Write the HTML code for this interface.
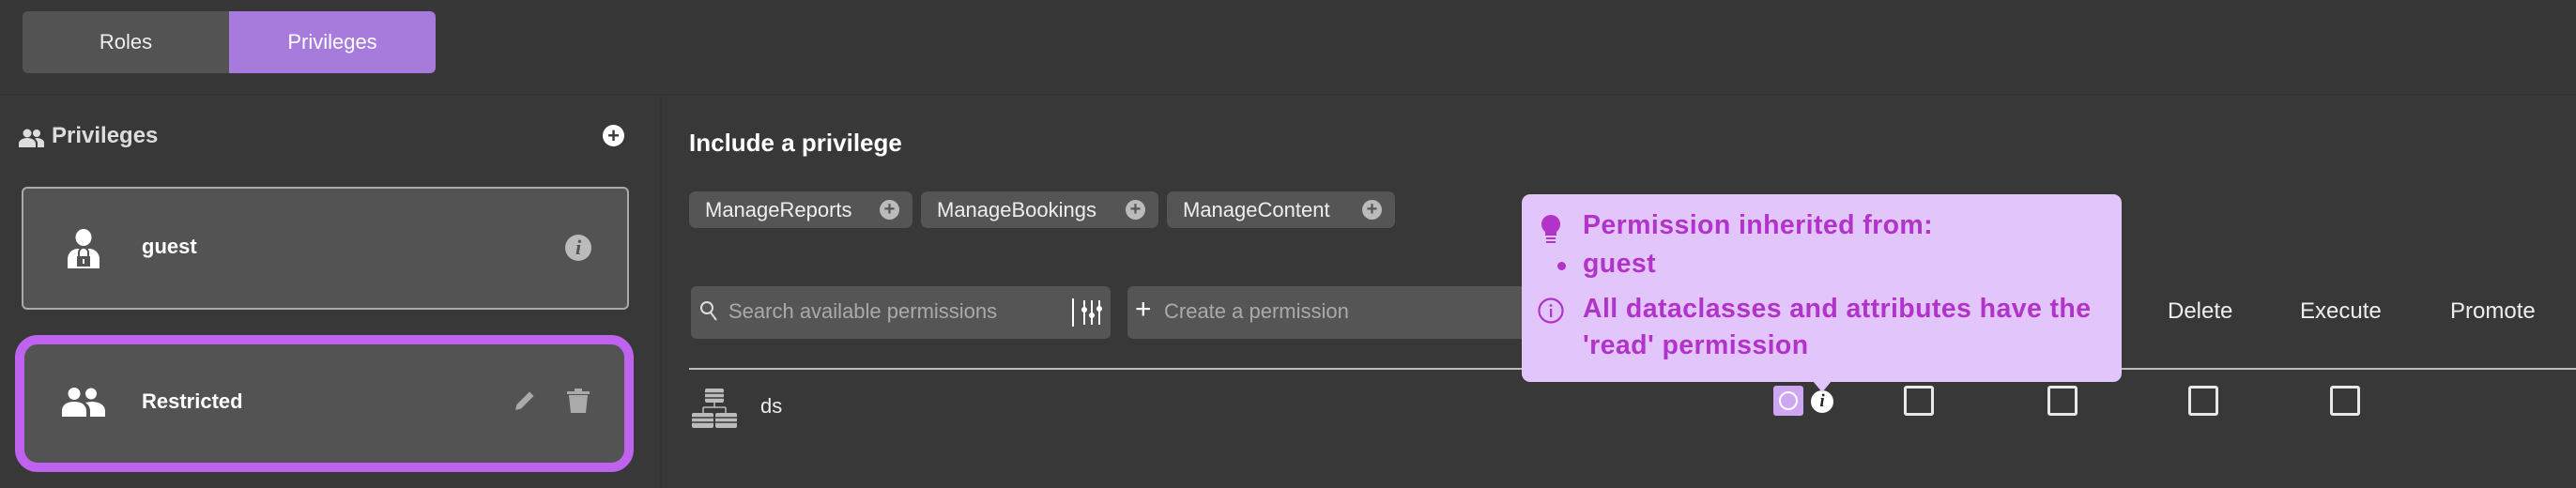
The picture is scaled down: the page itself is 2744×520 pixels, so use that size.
<!DOCTYPE html>
<html><head><meta charset="utf-8"><style>
*{margin:0;padding:0;box-sizing:border-box}
body{width:2744px;height:520px;background:#383838;font-family:"Liberation Sans",sans-serif;position:relative;overflow:hidden;color:#fff}
.a{position:absolute}
.chip{position:absolute;top:204px;height:39px;background:#555;border-radius:7px;font-size:22px;color:#eee;line-height:39px;padding-left:17px}
.chip i{position:absolute;right:14px;top:9px;width:21px;height:21px;border-radius:50%;background:#bbb;color:#555;font-style:normal;font-size:20px;line-height:21px;text-align:center;font-weight:bold}
.cb{position:absolute;top:411px;width:32px;height:32px;border:3px solid #e8e8ec;border-radius:3px}
.hd{position:absolute;top:318px;font-size:24px;color:#eee}
.tt{font-weight:bold;font-size:28.5px;letter-spacing:0.4px;color:#b133c9;position:absolute;left:1686px;white-space:nowrap}
</style></head><body>
<div class="a" style="left:0;top:0;width:2744px;height:102px;background:#373737;border-bottom:2px solid #333"></div>
<div class="a" style="left:24px;top:12px;width:440px;height:66px;border-radius:6px;overflow:hidden">
<div class="a" style="left:0;top:0;width:220px;height:66px;background:#535353;color:#eee;font-size:22px;text-align:center;line-height:66px">Roles</div>
<div class="a" style="left:220px;top:0;width:220px;height:66px;background:#a67bdc;color:#fff;font-size:22px;text-align:center;line-height:66px">Privileges</div>
</div>
<div class="a" style="left:703px;top:102px;width:2px;height:418px;background:#333"></div>
<!-- left panel -->
<svg class="a" style="left:20px;top:137px" width="27" height="20" viewBox="0 0 27 20"><circle cx="9" cy="5" r="4.5" fill="#ddd"/><circle cx="19" cy="5" r="4" fill="#ddd"/><path d="M0 20v-4c0-4 5-6 9-6s9 2 9 6v4z M19 10c4 0 8 2 8 5v5h-7v-4c0-2-1-4-3-5z" fill="#ddd"/></svg>
<div class="a" style="left:55px;top:131px;font-size:24px;color:#ddd;font-weight:bold">Privileges</div>
<div class="a" style="left:642px;top:133px;width:23px;height:23px;border-radius:50%;background:#fff;color:#383838;font-weight:bold;font-size:22px;line-height:23px;text-align:center">+</div>
<div class="a" style="left:23px;top:199px;width:647px;height:131px;background:#535353;border:2px solid #aaa;border-radius:6px"></div>
<svg class="a" style="left:72px;top:244px" width="34" height="42" viewBox="0 0 34 42"><ellipse cx="17" cy="9" rx="8.5" ry="9" fill="#fff"/><path d="M0 42v-10c0-6 5-11 11-11h12c6 0 11 5 11 11v10z" fill="#fff"/><rect x="10" y="29" width="14" height="11" fill="#535353"/><path d="M12 29v-4a5 5 0 0 1 10 0v4" stroke="#535353" stroke-width="2" fill="none"/><rect x="16" y="32" width="2" height="5" fill="#fff"/></svg>
<div class="a" style="left:151px;top:250px;font-size:22px;font-weight:bold;color:#fff">guest</div>
<div class="a" style="left:602px;top:250px;width:28px;height:28px;border-radius:50%;background:#bbb;color:#535353;font-family:'Liberation Serif',serif;font-style:italic;font-weight:bold;font-size:22px;text-align:center;line-height:28px">i</div>
<div class="a" style="left:16px;top:357px;width:659px;height:146px;background:#535353;border:10px solid #c062f0;border-radius:24px"></div>
<svg class="a" style="left:66px;top:413px" width="46" height="31" viewBox="0 0 46 31"><circle cx="13" cy="6.5" r="6.5" fill="#fff"/><circle cx="31" cy="6.5" r="6" fill="#fff"/><path d="M0 31v-6c0-7 6-10 13-10s13 3 13 10v6z M31 15c8 0 15 3 15 10v6h-16v-6c0-4-2-7-5-9z" fill="#fff"/></svg>
<div class="a" style="left:151px;top:415px;font-size:22px;font-weight:bold;color:#fff">Restricted</div>
<svg class="a" style="left:547px;top:415px" width="24" height="24" viewBox="0 0 24 24"><path d="M2 22l1.5-6L17 2.5l4.5 4.5L8 20.5z" fill="#aaa"/></svg>
<svg class="a" style="left:604px;top:414px" width="24" height="26" viewBox="0 0 24 26"><rect x="0" y="3" width="24" height="3" fill="#aaa"/><rect x="8" y="0" width="8" height="4" fill="#aaa"/><path d="M2 7h20l-2 19H4z" fill="#aaa"/></svg>
<!-- right -->
<div class="a" style="left:734px;top:137px;font-size:26px;font-weight:bold;color:#fff">Include a privilege</div>
<div class="chip" style="left:734px;width:238px">ManageReports<i>+</i></div>
<div class="chip" style="left:981px;width:253px">ManageBookings<i>+</i></div>
<div class="chip" style="left:1243px;width:243px">ManageContent<i>+</i></div>
<div class="a" style="left:736px;top:305px;width:447px;height:56px;background:#555;border-radius:6px"></div>
<svg class="a" style="left:745px;top:320px" width="20" height="24" viewBox="0 0 20 24"><circle cx="8" cy="8" r="6" stroke="#ddd" stroke-width="2" fill="none"/><path d="M12 13l6 8" stroke="#ddd" stroke-width="2"/></svg>
<div class="a" style="left:776px;top:319px;font-size:22px;color:#aaa">Search available permissions</div>
<div class="a" style="left:1142px;top:318px;width:2px;height:30px;background:#fff"></div>
<svg class="a" style="left:1151px;top:320px" width="24" height="26" viewBox="0 0 24 26"><path d="M4 0v26M12 0v26M20 0v26" stroke="#fff" stroke-width="2"/><circle cx="4" cy="10" r="3" fill="#fff"/><circle cx="12" cy="16" r="3" fill="#fff"/><circle cx="20" cy="9" r="3" fill="#fff"/></svg>
<div class="a" style="left:1201px;top:305px;width:440px;height:56px;background:#555;border-radius:6px"></div>
<div class="a" style="left:1209px;top:313px;font-size:30px;color:#fff;font-weight:300">+</div>
<div class="a" style="left:1240px;top:319px;font-size:22px;color:#aaa">Create a permission</div>
<div class="a" style="left:734px;top:392px;width:2010px;height:2px;background:#bbb"></div>
<div class="hd" style="left:2309px">Delete</div>
<div class="hd" style="left:2450px">Execute</div>
<div class="hd" style="left:2610px">Promote</div>
<svg class="a" style="left:737px;top:414px" width="48" height="42" viewBox="0 0 48 42"><rect x="14" y="0" width="20" height="15" rx="2" fill="#bbb"/><path d="M14 5h20M14 10h20" stroke="#383838" stroke-width="1.5"/><path d="M24 15v5M12 20h24M12 20v6M36 20v6" stroke="#bbb" stroke-width="1.5"/><rect x="0" y="26" width="23" height="16" rx="2" fill="#bbb"/><rect x="25" y="26" width="23" height="16" rx="2" fill="#bbb"/><path d="M0 31h48M0 36h48" stroke="#383838" stroke-width="1.5"/></svg>
<div class="a" style="left:810px;top:420px;font-size:22px;color:#eee">ds</div>
<div class="a" style="left:1889px;top:411px;width:32px;height:32px;background:#cfa6f4;border-radius:3px"></div>
<div class="a" style="left:1895px;top:417px;width:20px;height:20px;border:2.5px solid #fff;border-radius:50%"></div>
<div class="a" style="left:1929px;top:416px;width:24px;height:24px;border-radius:50%;background:#fff;color:#222;font-family:'Liberation Serif',serif;font-style:italic;font-weight:bold;font-size:19px;text-align:center;line-height:24px">i</div>
<div class="cb" style="left:2028px"></div>
<div class="cb" style="left:2181px"></div>
<div class="cb" style="left:2331px"></div>
<div class="cb" style="left:2482px"></div>
<!-- tooltip -->
<div class="a" style="left:1621px;top:207px;width:639px;height:200px;background:#e2c6fb;border-radius:9px"></div>
<div class="a" style="left:1931px;top:406px;width:0;height:0;border-left:10px solid transparent;border-right:10px solid transparent;border-top:12px solid #e2c6fb"></div>
<svg class="a" style="left:1641px;top:229px" width="22" height="30" viewBox="0 0 22 30"><path d="M11 0a10 10 0 0 1 6 18v4H5v-4A10 10 0 0 1 11 0z" fill="#b133c9"/><rect x="6" y="24" width="10" height="2" fill="#b133c9"/><rect x="6" y="28" width="10" height="2" fill="#b133c9"/></svg>
<div class="tt" style="top:224px">Permission inherited from:</div>
<div class="a" style="left:1659px;top:279px;width:9px;height:9px;border-radius:50%;background:#b133c9"></div>
<div class="tt" style="top:265px">guest</div>
<svg class="a" style="left:1638px;top:317px" width="28" height="28" viewBox="0 0 28 28"><circle cx="14" cy="14" r="12.5" stroke="#b133c9" stroke-width="2.2" fill="none"/><rect x="13" y="12" width="2.2" height="9" fill="#b133c9"/><circle cx="14" cy="8.5" r="1.4" fill="#b133c9"/></svg>
<div class="tt" style="top:313px">All dataclasses and attributes have the</div>
<div class="tt" style="top:352px">'read' permission</div>
</body></html>
